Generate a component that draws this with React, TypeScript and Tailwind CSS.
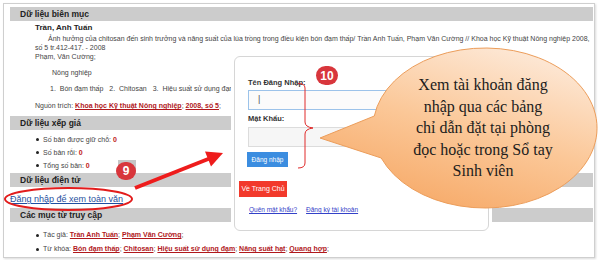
const bar = 'h-[14px] bg-[#cccccc] pl-[10px] flex items-center text-[8.5px] font-bold text-[#222]';
const redLink = 'font-bold text-[#b0181c] underline';

function Dot() {
  return <span className="inline-block w-[3px] h-[3px] rounded-full bg-[#222] mr-[4px] shrink-0" />;
}

function Badge({ n, className }: { n: string; className: string }) {
  return (
    <div
      className={`absolute rounded-full bg-[#d8363c] text-white font-bold text-[12px] leading-none flex items-center justify-center ${className}`}
    >
      {n}
    </div>
  );
}

function LoginPanel() {
  return (
    <div className="absolute left-[231px] top-[53px] w-[261px] h-[181px] bg-white p-[3px]">
      <div className="h-full border border-[#d6d6d6] rounded-[6px] pl-[4px] pt-[21px] text-[#333]">
        <div className="ml-[9px]">
          <div className="text-[7.5px] font-bold leading-[10px]">Tên Đăng Nhập:</div>
          <div className="mt-[2px] h-[20px] w-[230px] border border-[#9cc3ea] bg-[#fbfbfb] flex items-center pl-[9px] text-[9px] text-[#555]">
            |
          </div>
          <div className="mt-[4px] text-[7.5px] font-bold leading-[10px]">Mật Khẩu:</div>
          <div className="mt-[3px] h-[20px] w-[230px] border border-[#dcdcdc] bg-[#f6f6f6]" />
          <div className="mt-[5px] ml-[-1px] h-[15px] w-[41px] bg-[#3b8de0] text-white text-[6.5px] flex items-center justify-center">
            Đăng nhập
          </div>
        </div>
        <div className="mt-[14px] h-[16px] w-[48px] bg-[#f2392b] text-white text-[7px] flex items-center justify-center">
          Về Trang Chủ
        </div>
        <div className="mt-[8px] ml-[10px] flex gap-[9px] text-[6.5px] leading-[10px] text-[#3341c8] underline">
          <span>Quên mật khẩu?</span>
          <span>Đăng ký tài khoản</span>
        </div>
      </div>
    </div>
  );
}

function Marks() {
  return (
    <svg className="absolute left-0 top-0 pointer-events-none" width="601" height="260">
      <rect x="118" y="160" width="18" height="14" fill="#c6c6c6" />
      <ellipse cx="68.5" cy="199" rx="63.5" ry="11" fill="none" stroke="#e21c1c" strokeWidth="2" />
      <line x1="135" y1="188" x2="212" y2="157.5" stroke="#ee1c1c" strokeWidth="4" />
      <polygon points="223,153 211,166.5 205,151.5" fill="#ee1c1c" />
      <path
        d="M298,83.5 Q305,83.5 305,88 V122 Q305,127 313,128 Q305,129 305,134 V163 Q305,168 298,168"
        fill="none"
        stroke="#e02a2a"
        strokeWidth="1"
      />
    </svg>
  );
}

function Callout() {
  return (
    <>
      <svg className="absolute left-0 top-0 pointer-events-none" width="601" height="260">
        <defs>
          <linearGradient id="peach" x1="0.75" y1="0" x2="0.25" y2="1">
            <stop offset="0" stopColor="#fde9d8" />
            <stop offset="0.5" stopColor="#fbc797" />
            <stop offset="1" stopColor="#f6a764" />
          </linearGradient>
        </defs>
        <path
          d="M320,138 L374.3,116 A112,80 0 1,1 381.2,158 Z"
          fill="url(#peach)"
          stroke="#ec9d5a"
          strokeWidth="1"
        />
      </svg>
      <div className="absolute left-[383px] top-[74px] w-[200px] text-center text-[16px] leading-[21.5px] text-[#1c1c1c] font-['Liberation_Serif',serif]">
        Xem tài khoản đăng
        <br />
        nhập qua các bảng
        <br />
        chỉ dẫn đặt tại phòng
        <br />
        đọc hoặc trong Sổ tay
        <br />
        Sinh viên
      </div>
    </>
  );
}

export default function App() {
  return (
    <div className="relative w-[601px] h-[260px] bg-white overflow-hidden font-['Liberation_Sans',Arial,sans-serif]">
      <div className="ml-[3px] mt-[3px] w-[592px] h-[255px] border border-[#cfcfcf] shadow-[1px_1px_2px_rgba(0,0,0,0.15)] pl-[6px] pr-[1px] pt-[3px] overflow-hidden text-[7px] text-[#444]">
        <div className={bar}>Dữ liệu biên mục</div>
        <div className="pl-[25px]">
          <div className="mt-[2px] leading-[10px] text-[8px] font-bold text-[#222]">Trần, Anh Tuấn</div>
          <div className="mt-[1px] leading-[9px] pl-[13px] whitespace-nowrap">
            Ảnh hưởng của chitosan đến sinh trưởng và năng suất của lúa trồng trong điều kiện bón đạm thấp/ Trần Anh Tuấn, Phạm Văn Cường //  Khoa học Kỹ thuật Nông nghiệp 2008,
          </div>
          <div className="leading-[9px]">số 5 tr.412-417. - 2008</div>
          <div className="leading-[9px]">Phạm, Văn Cường;</div>
          <div className="mt-[7px] leading-[9px] pl-[17px]">Nông nghiệp</div>
          <div className="mt-[7px] leading-[9px] pl-[15px] flex gap-[6px]">
            <span>1.&nbsp;&nbsp;Bón đạm thấp</span>
            <span>2.&nbsp;&nbsp;Chitosan</span>
            <span>3.&nbsp;&nbsp;Hiệu suất sử dụng đạm</span>
          </div>
          <div className="mt-[8px] leading-[9px]">
            Nguồn trích: <span className={redLink}>Khoa học Kỹ thuật Nông nghiệp</span>;{' '}
            <span className={redLink}>2008, số 5</span>;
          </div>
        </div>
        <div className={`${bar} mt-[6px]`}>Dữ liệu xếp giá</div>
        <div className="mt-[3px] pl-[26px] leading-[13px]">
          <div className="flex items-center">
            <Dot />
            Số bản được giữ chỗ:&nbsp;<span className="font-bold text-[#c01818]">0</span>
          </div>
          <div className="flex items-center">
            <Dot />
            Số bản rỗi:&nbsp;<span className="font-bold text-[#c01818]">0</span>
          </div>
          <div className="flex items-center">
            <Dot />
            Tổng số bản:&nbsp;<span className="font-bold text-[#c01818]">0</span>
          </div>
        </div>
        <div className={`${bar} mt-[1px]`}>Dữ liệu điện tử</div>
        <div className="mt-[6px] leading-[12px] text-[9px] text-[#1f4fa0] underline">Đăng nhập để xem toàn văn</div>
        <div className={`${bar} mt-[3px]`}>Các mục từ truy cập</div>
        <div className="mt-[6px] pl-[26px] leading-[14px]">
          <div className="flex items-center">
            <Dot />
            Tác giả:&nbsp;<span className={redLink}>Trần Anh Tuấn</span>;&nbsp;
            <span className={redLink}>Phạm Văn Cường</span>;
          </div>
          <div className="flex items-center whitespace-nowrap">
            <Dot />
            Từ khóa:&nbsp;<span className={redLink}>Bón đạm thấp</span>;&nbsp;
            <span className={redLink}>Chitosan</span>;&nbsp;
            <span className={redLink}>Hiệu suất sử dụng đạm</span>;&nbsp;
            <span className={redLink}>Năng suất hạt</span>;&nbsp;
            <span className={redLink}>Quang hợp</span>;
          </div>
        </div>
      </div>

      <LoginPanel />
      <Marks />
      <Callout />
      <Badge n="9" className="left-[116px] top-[162px] w-[20px] h-[18px]" />
      <Badge n="10" className="left-[316px] top-[66px] w-[22px] h-[19px]" />
    </div>
  );
}
